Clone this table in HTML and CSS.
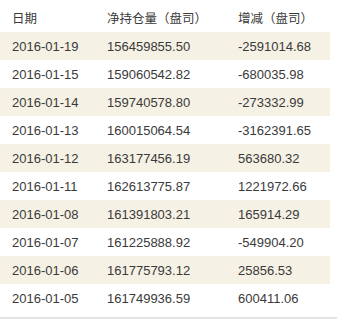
FILE: index.html
```html
<!DOCTYPE html>
<html lang="zh">
<head>
<meta charset="utf-8">
<title>持仓</title>
<link rel="stylesheet" href="styles.css">
</head>
<body>
<div class="wrap">
<table class="data">
<colgroup><col class="c1"><col class="c2"><col class="c3"></colgroup>
<thead>
<tr><th>日期</th><th>净持仓量（盘司）</th><th>增减（盘司）</th></tr>
</thead>
<tbody>
<tr><td>2016-01-19</td><td>156459855.50</td><td>-2591014.68</td></tr>
<tr><td>2016-01-15</td><td>159060542.82</td><td>-680035.98</td></tr>
<tr><td>2016-01-14</td><td>159740578.80</td><td>-273332.99</td></tr>
<tr><td>2016-01-13</td><td>160015064.54</td><td>-3162391.65</td></tr>
<tr><td>2016-01-12</td><td>163177456.19</td><td>563680.32</td></tr>
<tr><td>2016-01-11</td><td>162613775.87</td><td>1221972.66</td></tr>
<tr><td>2016-01-08</td><td>161391803.21</td><td>165914.29</td></tr>
<tr><td>2016-01-07</td><td>161225888.92</td><td>-549904.20</td></tr>
<tr><td>2016-01-06</td><td>161775793.12</td><td>25856.53</td></tr>
<tr><td>2016-01-05</td><td>161749936.59</td><td>600411.06</td></tr>
</tbody>
</table>
</div>
</body>
</html>
```
FILE: styles.css
```css
html, body {
  margin: 0;
  padding: 0;
  background: #ffffff;
}
body {
  font-family: "Liberation Sans", "Noto Sans CJK SC", sans-serif;
  font-size: 13px;
  color: #3a3a3a;
}
.wrap {
  padding-bottom: 5px;
  border-bottom: 2px solid #e4e4e4;
}
.data {
  width: 330px;
  border-collapse: collapse;
  table-layout: fixed;
}
.c1 { width: 95px; }
.c2 { width: 131px; }
.c3 { width: 104px; }
.data th {
  height: 32px;
  padding: 3px 0 0 12px;
  box-sizing: border-box;
  text-align: left;
  font-weight: normal;
  font-size: 12.5px;
  white-space: nowrap;
}
.data td {
  height: 28px;
  padding: 0 0 0 12px;
  box-sizing: border-box;
  white-space: nowrap;
}
.data tbody tr:nth-child(odd) {
  background: #f5f1e5;
}
```
